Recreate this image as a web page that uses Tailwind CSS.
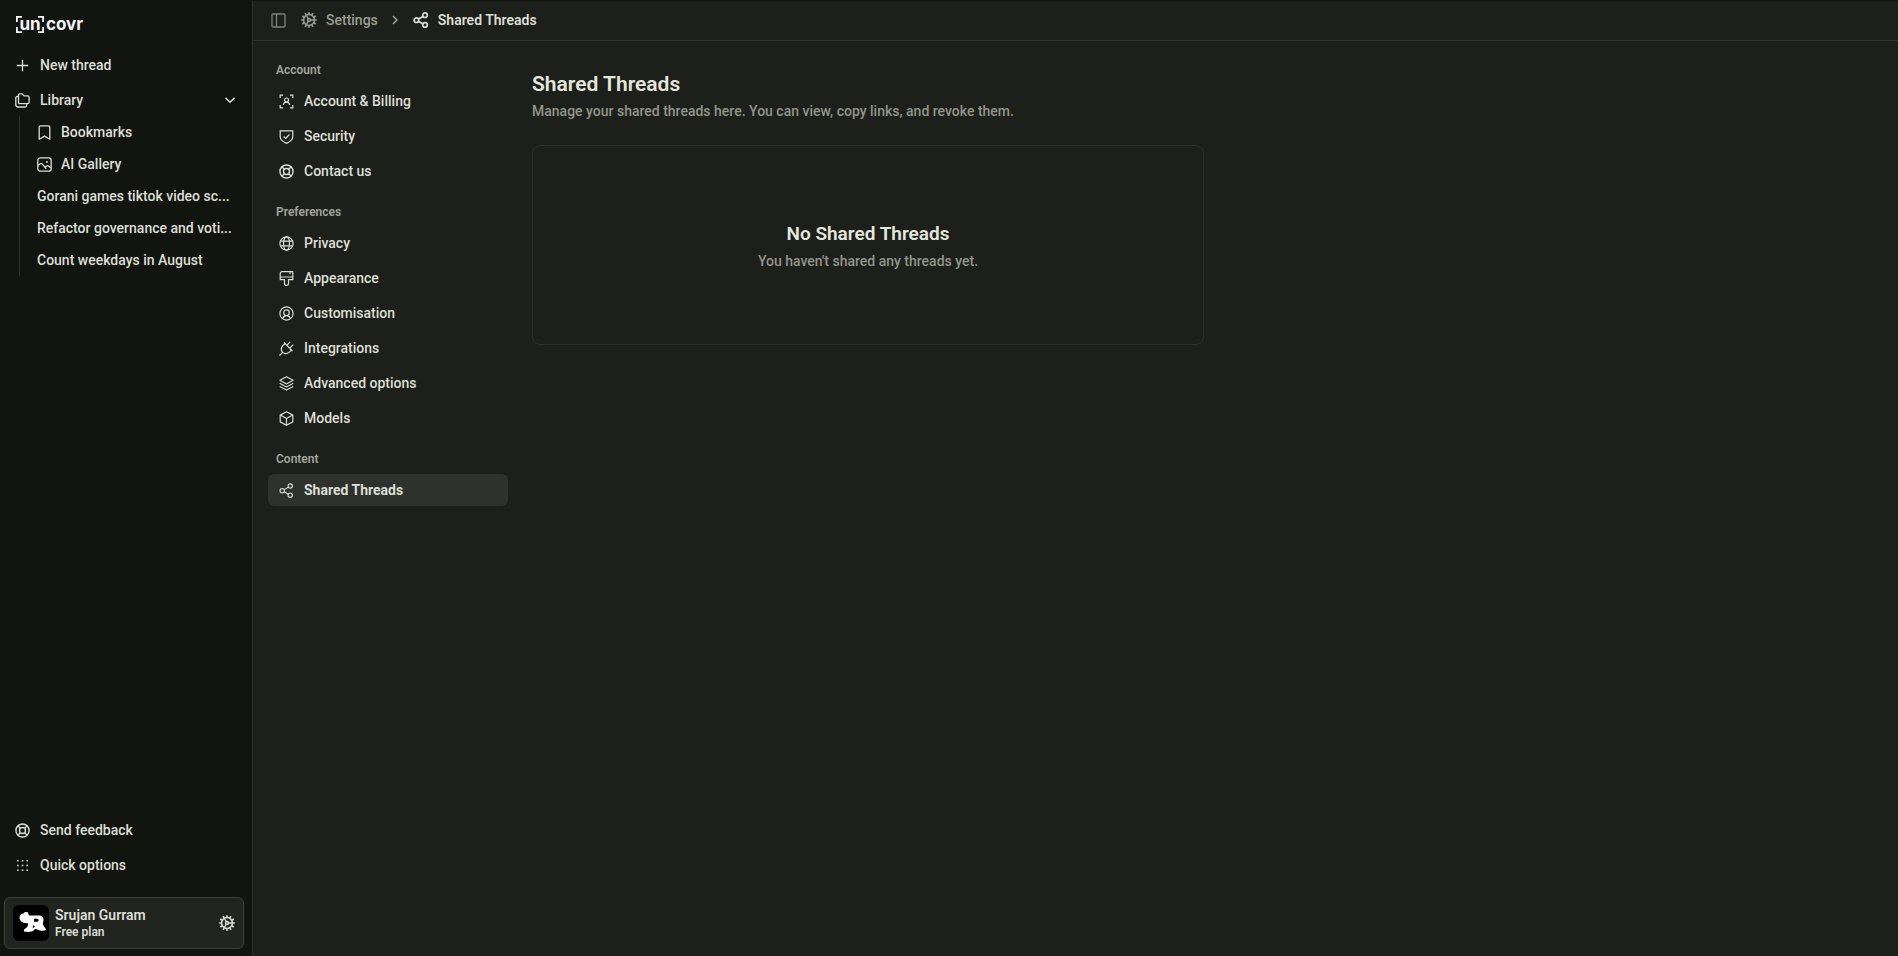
<!DOCTYPE html>
<html lang="en">
  <head>
    <meta charset="UTF-8" />
    <meta name="viewport" content="width=device-width, initial-scale=1.0" />
    <title>Shared Threads - Settings</title>
    <script src="https://cdn.jsdelivr.net/npm/@tailwindcss/browser@4"></script>
  </head>
  <body class="bg-[#12150f] text-[#dcdfd6] font-['Roboto',sans-serif] font-medium text-sm">
    <!-- Shared icons -->
    <svg class="hidden">
      <symbol id="gear" viewBox="0 0 16 16">
        <g fill="none" stroke="currentColor" stroke-width="1.5">
          <circle cx="8" cy="8" r="5.4" />
          <circle cx="8" cy="8" r="1.5" />
          <path stroke-width="1.3" d="M9.5 8h4M7.2 6.6 5.3 3.3M7.2 9.4l-1.9 3.3" />
          <path stroke-width="1.7" d="M8 .2v2.4M8 13.4v2.4M.2 8h2.4M13.4 8h2.4M4.1 1.2l1.2 2.1M10.7 12.7l1.2 2.1M1.2 4.1l2.1 1.2M12.7 10.7l2.1 1.2M1.2 11.9l2.1-1.2M12.7 5.3l2.1-1.2M4.1 14.8l1.2-2.1M10.7 3.3l1.2-2.1" />
        </g>
      </symbol>
      <symbol id="lifebuoy" viewBox="0 0 16 16">
        <g fill="none" stroke="currentColor" stroke-width="1.5">
          <circle cx="8" cy="8" r="7" />
          <circle cx="8" cy="8" r="3.2" />
          <path d="m3 3 2.7 2.7M13 3l-2.7 2.7M3 13l2.7-2.7M13 13l-2.7-2.7" />
        </g>
      </symbol>
      <symbol id="share" viewBox="0 0 16 16">
        <g fill="none" stroke="currentColor">
          <circle cx="3.4" cy="8.2" r="2.3" />
          <circle cx="12" cy="3.2" r="2.3" />
          <circle cx="12" cy="13" r="2.3" />
          <path d="m5.5 7.1 4.5-2.7M5.5 9.3l4.5 2.6" />
        </g>
      </symbol>
    </svg>

    <div class="flex min-h-screen">
      <!-- Sidebar -->
      <aside class="w-[252px] shrink-0 flex flex-col px-1 pb-[7px]">
        <a href="#" aria-label="uncovr" class="ml-3 my-4 h-[17px] flex items-center font-['Inter',sans-serif] font-bold text-[17px] leading-none text-[#f4f4fa]">
          <span class="relative flex items-center justify-center w-7 h-[17px]">
            <svg class="absolute inset-0 w-7 h-[17px]" viewBox="0 0 28 17" fill="none" stroke="currentColor" stroke-width="1.8">
              <path d="M6 .9H.9V6M.9 11v5.1H6M22 .9h5.1V6M27.1 11v5.1H22" />
            </svg>
            un
          </span>
          <span class="ml-[2px]">covr</span>
        </a>

        <nav class="flex flex-col gap-[3px]">
          <a href="#" class="flex items-center h-8 pl-[11px] gap-[10px]">
            <svg class="w-[15px] h-[15px]" viewBox="0 0 15 15" fill="none" stroke="currentColor" stroke-width="1.3"><path d="M7.5 1.8v11.4M1.8 7.5h11.4" /></svg>
            New thread
          </a>
          <div>
            <button class="flex items-center w-60 h-8 pl-[11px] gap-[10px]">
              <svg class="w-[15px] h-[15px]" viewBox="0 0 15 15" fill="none" stroke="currentColor" stroke-width="1.3" stroke-linejoin="round">
                <path d="M3.5 2.2Q3.5.9 4.8.9h2.4L9 2.9h3.6q1.5 0 1.5 1.5v4.8q0 1.5-1.5 1.5H5q-1.5 0-1.5-1.5z" />
                <path d="M3.3 3.5H2.2Q.8 3.5.8 5v6.5q0 2.5 2.4 2.5h6.9q1.5 0 1.5-1.5v-1.6" />
              </svg>
              Library
              <svg class="ml-auto mr-2 w-3 h-3" viewBox="0 0 12 12" fill="none" stroke="currentColor" stroke-width="1.5"><path d="m1.5 3.8 4.5 4.4 4.5-4.4" /></svg>
            </button>
            <ul class="ml-[15px] w-[218px] border-l border-[#30332c]">
              <li>
                <a href="#" class="flex items-center h-8 pl-[17px] gap-[9px]">
                  <svg class="w-[15px] h-[15px]" viewBox="0 0 15 15" fill="none" stroke="currentColor" stroke-width="1.3" stroke-linejoin="round"><path d="M2.2 2.3q0-1.5 1.5-1.5h7.6q1.5 0 1.5 1.5v11.9L7.5 11.1l-5.3 3.1z" /></svg>
                  Bookmarks
                </a>
              </li>
              <li>
                <a href="#" class="flex items-center h-8 pl-[17px] gap-[9px]">
                  <svg class="w-[15px] h-[15px]" viewBox="0 0 15 15" fill="none" stroke="currentColor" stroke-width="1.3"><rect x=".8" y=".8" width="13.4" height="13.4" rx="2.5" /><path d="M1 8.2 3.3 6.7q1-.6 1.8.2l4.2 4.8M8.2 10.2l1.4-1.3q.9-.7 1.8 0l2.6 2.2" /><circle cx="10" cy="5" r=".9" fill="currentColor" stroke="none" /></svg>
                  AI Gallery
                </a>
              </li>
              <li><a href="#" class="block h-8 leading-8 pl-[17px] whitespace-nowrap">Gorani games tiktok video sc...</a></li>
              <li><a href="#" class="block h-8 leading-8 pl-[17px] whitespace-nowrap">Refactor governance and voti...</a></li>
              <li><a href="#" class="block h-8 leading-8 pl-[17px] whitespace-nowrap">Count weekdays in August</a></li>
            </ul>
          </div>
        </nav>

        <div class="mt-auto flex flex-col gap-[3px]">
          <a href="#" class="flex items-center h-8 pl-[11px] gap-[10px]">
            <svg class="w-[15px] h-[15px]"><use href="#lifebuoy" /></svg>
            Send feedback
          </a>
          <button class="flex items-center h-8 pl-[11px] gap-[10px]">
            <svg class="w-[15px] h-[15px]" viewBox="0 0 15 15" fill="currentColor">
              <path d="M2 2h1.6v1.6H2zM6.7 2h1.6v1.6H6.7zM11.4 2H13v1.6h-1.6zM2 6.7h1.6v1.6H2zM6.7 6.7h1.6v1.6H6.7zM11.4 6.7H13v1.6h-1.6zM2 11.4h1.6V13H2zM6.7 11.4h1.6V13H6.7zM11.4 11.4H13V13h-1.6z" />
            </svg>
            Quick options
          </button>
          <button class="mt-[13px] w-60 h-[52px] flex items-center gap-[6px] px-2 rounded-md border border-[#3c3f38] bg-[#22241f] text-left">
            <svg class="w-9 h-9 rounded-md bg-black" viewBox="0 0 36 36" fill="#fff">
              <path d="M6.5 12.5c0-2.5 2-4 4-4 1-2 5-2 5 .5 0 1 .5 1.5 1.5 1.5h9c3 0 5 2 4.5 5-.2 1.5-1 2.5-.5 4 .5 2.5 3 3 3 5.5-2.5 1.2-6 .8-8.500-.5-2-1-3-.5-4 1-1.5 1.5-4 1.5-8.500 1.3-1.800-.2-1.500-2 0-3 2-1.500 3.500-3 3-5.800-4 1-8.500-1.500-8.500-5.500z" />
              <path fill="#000" d="M21 13.800h3q1.600 0 1.600 1.500t-1.600 1.500h-3zM20.500 20l1.500 1.500-2.500 2z" />
            </svg>
            <span class="flex flex-col font-semibold">
              <span class="leading-[18px]">Srujan Gurram</span>
              <span class="text-xs">Free plan</span>
            </span>
            <svg class="ml-auto w-4 h-4"><use href="#gear" /></svg>
          </button>
        </div>
      </aside>

      <!-- Main panel -->
      <div class="flex-1 mt-px bg-[#1d1f1a] border-l border-[#2d302a]">
        <header class="flex items-center h-10 pl-[18px] pb-px border-b border-[#30332d]">
          <button aria-label="Toggle sidebar" class="text-[#80837a]">
            <svg class="w-[15px] h-[15px]" viewBox="0 0 15 15" fill="none" stroke="currentColor" stroke-width="1.3"><rect x="1" y="1" width="13" height="13" rx="1" /><path d="M5.5 1v13" /></svg>
          </button>
          <a href="#" class="ml-[15px] flex items-center gap-[9px] text-[#9a9d94]">
            <svg class="w-4 h-4"><use href="#gear" /></svg>
            Settings
          </a>
          <svg class="ml-3 mr-[13px] w-[10px] h-[10px]" viewBox="0 0 10 10" fill="none" stroke="#b0b3aa" stroke-width="1.3"><path d="m3 1 4 4-4 4" /></svg>
          <span class="flex items-center gap-[9px] font-semibold">
            <svg class="w-4 h-4" stroke-width="1.7"><use href="#share" /></svg>
            Shared Threads
          </span>
        </header>

        <div class="flex pt-[17px] pl-[15px] gap-6">
          <!-- Settings navigation -->
          <nav class="w-60 shrink-0 flex flex-col gap-[13px]">
            <section class="flex flex-col gap-[3px]">
              <h2 class="h-6 leading-6 pl-2 text-xs font-semibold text-[#a3a69d]">Account</h2>
              <a href="#" class="flex items-center h-8 pl-[11px] gap-[10px] rounded-md">
                <svg class="w-[15px] h-[15px]" viewBox="0 0 15 15" fill="none" stroke="currentColor" stroke-width="1.2"><path d="M1.2 4V1.2H4M11 1.2h2.8V4M13.8 11v2.8H11M4 13.8H1.2V11" /><circle cx="7.5" cy="6" r="2" /><path d="M4.3 11q.6-2.9 3.2-2.9t3.2 2.9" /></svg>
                Account &amp; Billing
              </a>
              <a href="#" class="flex items-center h-8 pl-[11px] gap-[10px] rounded-md">
                <svg class="w-[15px] h-[15px]" viewBox="0 0 15 15" fill="none" stroke="currentColor" stroke-width="1.2"><path d="M1.2 1.8h12.6v5.7q0 4-6.3 6.9-6.3-2.9-6.3-6.9z" /><path d="m4.7 7.5 2 2 3.7-4" /></svg>
                Security
              </a>
              <a href="#" class="flex items-center h-8 pl-[11px] gap-[10px] rounded-md">
                <svg class="w-[15px] h-[15px]"><use href="#lifebuoy" /></svg>
                Contact us
              </a>
            </section>
            <section class="flex flex-col gap-[3px]">
              <h2 class="h-6 leading-6 pl-2 text-xs font-semibold text-[#a3a69d]">Preferences</h2>
              <a href="#" class="flex items-center h-8 pl-[11px] gap-[10px] rounded-md">
                <svg class="w-[15px] h-[15px]" viewBox="0 0 15 15" fill="none" stroke="currentColor" stroke-width="1.2"><circle cx="7.5" cy="7.5" r="6.6" /><ellipse cx="7.5" cy="7.5" rx="3" ry="6.6" /><path d="M1.5 5.2h12M1.5 9.8h12" /></svg>
                Privacy
              </a>
              <a href="#" class="flex items-center h-8 pl-[11px] gap-[10px] rounded-md">
                <svg class="w-[15px] h-[15px]" viewBox="0 0 15 15" fill="none" stroke="currentColor" stroke-width="1.2" stroke-linejoin="round"><path d="M3.2.7h10.6v8H9.500v4q0 1.700-2 1.700t-2-1.700v-4H1.200v-6q0-2 2-2zM1.200 6h12.600M11 .8v2.400" /></svg>
                Appearance
              </a>
              <a href="#" class="flex items-center h-8 pl-[11px] gap-[10px] rounded-md">
                <svg class="w-[15px] h-[15px]" viewBox="0 0 15 15" fill="none" stroke="currentColor" stroke-width="1.2"><circle cx="7.5" cy="7.5" r="6.6" /><circle cx="7.5" cy="6.7" r="2.8" /><path d="M3.5 12.6q1-3 4-3t4 3" /></svg>
                Customisation
              </a>
              <a href="#" class="flex items-center h-8 pl-[11px] gap-[10px] rounded-md">
                <svg class="w-[15px] h-[15px]" viewBox="0 0 15 15" fill="none" stroke="currentColor" stroke-width="1.2" stroke-linejoin="round"><path d="M.5 14.5 3.6 11.4M6 2.5 12.5 9l-2.4 2.4q-3.2 2.6-6.5 0-2.600-3.300 0-6.500zM7.800 4.300 11.200.9M10.700 7.200 14.300 3.600M5 1.500l1 1M12.500 9l1 1" /></svg>
                Integrations
              </a>
              <a href="#" class="flex items-center h-8 pl-[11px] gap-[10px] rounded-md">
                <svg class="w-[15px] h-[15px]" viewBox="0 0 15 15" fill="none" stroke="currentColor" stroke-width="1.1" stroke-linejoin="round"><path d="m7.5.7 6.6 3.6-6.6 3.6L.9 4.3zM.7 7.3l6.8 3.7 6.8-3.7M.7 10.4l6.8 3.7 6.8-3.7" /></svg>
                Advanced options
              </a>
              <a href="#" class="flex items-center h-8 pl-[11px] gap-[10px] rounded-md">
                <svg class="w-[15px] h-[15px]" viewBox="0 0 15 15" fill="none" stroke="currentColor" stroke-width="1.2" stroke-linejoin="round"><path d="m7.5.7 6.3 3.4v6.8l-6.3 3.4-6.3-3.4V4.1zM1.2 4.1l6.3 3.5 6.3-3.5M7.5 7.6v6.7" /></svg>
                Models
              </a>
            </section>
            <section class="flex flex-col gap-[3px]">
              <h2 class="h-6 leading-6 pl-2 text-xs font-semibold text-[#a3a69d]">Content</h2>
              <a href="#" class="flex items-center h-8 pl-[11px] gap-[10px] rounded-md bg-[#2f312c] font-bold">
                <svg class="w-[15px] h-[15px]" stroke-width="1.2"><use href="#share" /></svg>
                Shared Threads
              </a>
            </section>
          </nav>

          <!-- Content -->
          <main class="flex-1 max-w-2xl pt-3">
            <h1 class="text-[21px] leading-7 font-semibold text-[#e4e7de]">Shared Threads</h1>
            <p class="mt-[3px] text-[#92958b]">Manage your shared threads here. You can view, copy links, and revoke them.</p>
            <div class="mt-6 pt-[74px] pb-[73px] rounded-lg border border-[#2d302a] text-center">
              <h3 class="text-[19px] leading-7 font-semibold text-[#e4e7de]">No Shared Threads</h3>
              <p class="mt-[3px] text-[#92958b]">You haven't shared any threads yet.</p>
            </div>
          </main>
        </div>
      </div>
    </div>
  </body>
</html>
